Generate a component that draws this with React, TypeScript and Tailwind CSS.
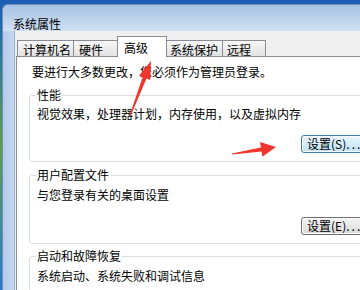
import React from "react";

const font = { fontFamily: '"Noto Sans CJK SC", "Noto Sans", sans-serif' };

function Tab({ label, width, pl, selected }: { label: string; width: string; pl: string; selected?: boolean }) {
  if (selected) {
    return (
      <div className={`relative z-10 -mb-px h-[21px] ${width} ${pl} -ml-px border border-b-0 border-[#898c95] bg-white pt-[4px] text-[12px] leading-[14px] text-black`}>
        {label}
      </div>
    );
  }
  return (
    <div className={`h-[16px] ${width} ${pl} -ml-px first:ml-0 border border-b-0 border-[#898c95] bg-gradient-to-b from-[#f7f7f7] to-[#e2e2e2] pt-[2px] text-[12px] leading-[14px] text-black`}>
      {label}
    </div>
  );
}

function SettingsButton({ label, hotkey, focused }: { label: string; hotkey: string; focused?: boolean }) {
  return (
    <button
      className={
        focused
          ? "h-[18px] w-[75px] rounded-[3px] border border-[#3c7fb1] bg-gradient-to-b from-[#eaf6fd] to-[#bfe3f7] pl-[5px] text-left text-[12px] leading-[14px] text-black shadow-[inset_0_0_0_1px_#f6fbff]"
          : "h-[18px] w-[75px] rounded-[3px] border border-[#707070] bg-gradient-to-b from-[#f4f4f4] to-[#d9d9d9] pl-[5px] text-left text-[12px] leading-[14px] text-black shadow-[inset_0_0_0_1px_#fcfcfc]"
      }
    >
      {label}({hotkey})<span className="tracking-[2px]">...</span>
    </button>
  );
}

function Group({
  title,
  text,
  button,
  className,
  textGap = "mt-[5px]",
  buttonGap = "mt-[14px]",
}: {
  title: string;
  text: string;
  button?: React.ReactNode;
  className: string;
  textGap?: string;
  buttonGap?: string;
}) {
  return (
    <fieldset className={`rounded-[3px] border border-[#d5dfe5] px-[6px] pb-[8px] ${className}`}>
      <legend className="px-[1px] text-[12px] leading-[14px] text-black">{title}</legend>
      <div className={`${textGap} pl-[1px] text-[12px] leading-[14px] text-black`}>{text}</div>
      {button && <div className={`${buttonGap} flex justify-end`}>{button}</div>}
    </fieldset>
  );
}

export default function App() {
  return (
    <div
      className="relative flex h-[290px] w-[360px] overflow-hidden bg-gradient-to-b from-[#1c5cb6] via-[#5f9c48] to-[#2f76c8]"
      style={font}
    >
      <div className="ml-[2px] mt-[4px] flex w-[420px] shrink-0 flex-col rounded-tl-[6px] border-l border-t border-[#6f8db5] bg-[#bcd3ee]">
        {/* title bar */}
        <div className="h-[28px] rounded-tl-[6px] bg-gradient-to-b from-[#a6c2e4] to-[#d0e0f2] pl-[10px] pt-[12px] text-[12px] leading-[14px] text-black">
          系统属性
        </div>

        <div className="flex flex-1">
          <div className="w-[12px] border-r border-[#94aecd] bg-gradient-to-r from-[#b2cbea] to-[#c4d8f0]" />

          <div className="flex-1 bg-[#f0f0f0] pt-[5px]">
            {/* tabs */}
            <div className="flex items-end pl-[2px]">
              <Tab label="计算机名" width="w-[57px]" pl="pl-[5px]" />
              <Tab label="硬件" width="w-[45px]" pl="pl-[5px]" />
              <Tab label="高级" width="w-[50px]" pl="pl-[6px]" selected />
              <Tab label="系统保护" width="w-[57px]" pl="pl-[3px]" />
              <Tab label="远程" width="w-[44px]" pl="pl-[4px]" />
            </div>

            {/* panel */}
            <div className="ml-[1px] h-[260px] w-[380px] border border-[#898c95] bg-white px-[12px] pt-[8px]">
              <div className="pl-[3px] text-[12px] leading-[14px] text-black">
                要进行大多数更改，您必须作为管理员登录。
              </div>

              <Group
                className="mt-[9px]"
                title="性能"
                text="视觉效果，处理器计划，内存使用，以及虚拟内存"
                button={<SettingsButton label="设置" hotkey="S" focused />}
              />
              <Group
                className="mt-[6px]"
                title="用户配置文件"
                text="与您登录有关的桌面设置"
                textGap="mt-[6px]"
                buttonGap="mt-[15px]"
                button={<SettingsButton label="设置" hotkey="E" />}
              />
              <Group className="mt-[5px]" title="启动和故障恢复" text="系统启动、系统失败和调试信息" textGap="mt-[6px]" />
            </div>
          </div>
        </div>
      </div>

      {/* red annotation arrows */}
      <svg className="pointer-events-none absolute left-0 top-0" width="360" height="290" viewBox="0 0 360 290">
        <polygon
          fill="#f0362c"
          points="129.5,115.8 142.7,77.1 139,75.7 151,61 150.2,79.9 146.5,78.5 130.5,116.2"
        />
        <polygon
          fill="#f0362c"
          points="232,153.5 260.9,147.4 260,141.9 276,147 262.4,156.8 261.5,151.4 232.1,154.5"
        />
      </svg>
    </div>
  );
}
